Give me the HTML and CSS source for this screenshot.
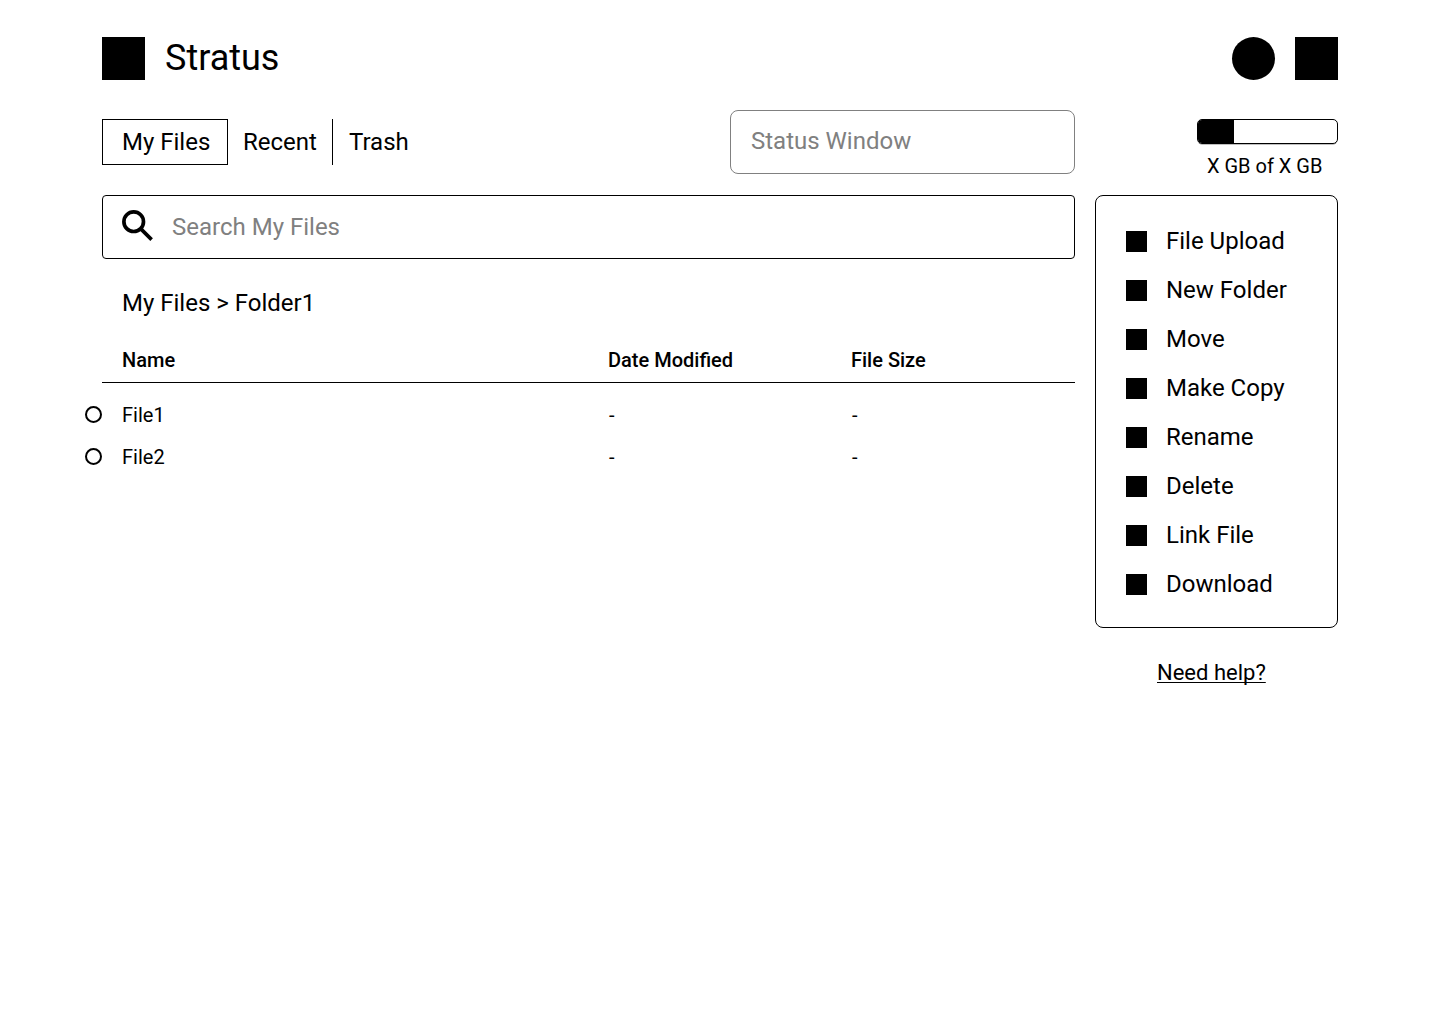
FILE: index.html
```html
<!DOCTYPE html>
<html lang="en">
<head>
<meta charset="utf-8">
<title>Stratus</title>
<link rel="stylesheet" href="styles.css">
</head>
<body>
<div class="page">
  <header class="header">
    <div class="logo"></div>
    <h1 class="brand">Stratus</h1>
    <div class="avatar"></div>
    <div class="apps"></div>
  </header>
  <div class="toolbar">
    <nav class="tabs">
      <a class="tab tab-active">My Files</a>
      <a class="tab tab-recent">Recent</a>
      <a class="tab tab-trash">Trash</a>
    </nav>
    <div class="status">Status Window</div>
    <div class="storage">
      <div class="meter"><div class="meter-fill"></div></div>
      <div class="storage-label">X GB of X GB</div>
    </div>
  </div>
  <div class="content">
    <main class="main">
      <div class="search">
        <svg class="search-icon" viewBox="0 0 31 31"><circle cx="11.7" cy="11.7" r="9.8"/><path d="M18.6 18.6 29.6 29.6"/></svg>
        <span>Search My Files</span>
      </div>
      <div class="breadcrumb">My Files &gt; Folder1</div>
      <div class="row row-head"><span>Name</span><span>Date Modified</span><span>File Size</span></div>
      <div class="rows">
        <div class="row"><i class="radio"></i><span>File1</span><span class="empty">-</span><span class="empty">-</span></div>
        <div class="row"><i class="radio"></i><span>File2</span><span class="empty">-</span><span class="empty">-</span></div>
      </div>
    </main>
    <aside class="side">
      <ul class="menu">
        <li>File Upload</li>
        <li>New Folder</li>
        <li>Move</li>
        <li>Make Copy</li>
        <li>Rename</li>
        <li>Delete</li>
        <li>Link File</li>
        <li>Download</li>
      </ul>
      <a class="help">Need help?</a>
    </aside>
  </div>
</div>
</body>
</html>
```
FILE: styles.css
```css
* { box-sizing: border-box; }
body {
  margin: 0;
  background: #fff;
  color: #000;
  font: 24px/28px Roboto, sans-serif;
}
.page { width: 1236px; margin: 0 auto; padding-top: 37px; }

.header { display: flex; height: 43px; align-items: center; }
.logo, .avatar, .apps { width: 43px; height: 43px; background: #000; }
.brand { margin: 0 auto 2px 20px; font-size: 36px; line-height: 42px; font-weight: 400; }
.avatar { border-radius: 50%; margin-right: 20px; }

.toolbar { display: flex; height: 64px; margin-top: 30px; }
.tabs { display: flex; height: 46px; margin-top: 9px; line-height: 46px; }
.tab-active { width: 126px; padding-left: 19px; border: 1px solid #000; line-height: 44px; }
.tab-recent { width: 105px; padding-left: 15px; border-right: 1px solid #000; }
.tab-trash { padding-left: 16px; }
.status {
  width: 345px;
  margin-left: auto;
  padding: 16px 20px;
  border: 1px solid #808080;
  border-radius: 8px;
  color: #808080;
}
.storage { width: 141px; margin: 9px 0 0 122px; }
.meter {
  height: 25px;
  border: 1px solid #000;
  border-radius: 5px;
  box-shadow: 0 1px 0 -0.5px rgba(0, 0, 0, 0.5);
  overflow: hidden;
}
.meter-fill { width: 36px; height: 100%; background: #000; }
.storage-label { margin-top: 10px; padding-left: 10px; font-size: 20px; line-height: 24px; white-space: nowrap; }

.content { display: flex; gap: 20px; margin-top: 21px; }
.main { width: 973px; }
.search {
  display: flex;
  align-items: center;
  gap: 19px;
  height: 64px;
  padding-left: 19px;
  border: 1px solid #000;
  border-radius: 4px;
  color: #808080;
}
.search-icon { width: 31px; height: 31px; margin-bottom: 3px; fill: none; stroke: #000; stroke-width: 3.7; }
.breadcrumb { margin-top: 30px; padding-left: 20px; }
.row {
  position: relative;
  display: grid;
  grid-template-columns: 486px 243px 1fr;
  height: 42px;
  padding-left: 20px;
  align-items: center;
  font-size: 20px;
}
.row-head { margin-top: 22px; height: 44px; padding-bottom: 2px; border-bottom: 1px solid #000; font-weight: 500; }
.rows { padding-top: 11px; }
.empty { padding-left: 1px; }
.radio {
  position: absolute;
  left: -17px;
  top: 12px;
  width: 17px;
  height: 17px;
  border: 2px solid #000;
  border-radius: 50%;
}

.side { width: 243px; }
.menu {
  height: 433px;
  margin: 0;
  padding: 20px 0 0 30px;
  border: 1px solid #000;
  border-radius: 8px;
  list-style: none;
}
.menu li { display: flex; align-items: center; gap: 19px; height: 49px; }
.menu li::before { content: ""; width: 21px; height: 21px; margin-top: 2px; background: #000; }
.help {
  display: block;
  margin: 31px 0 0 62px;
  font-size: 22px;
  text-decoration: underline;
  text-decoration-thickness: 1px;
  text-underline-offset: 2px;
  text-decoration-skip-ink: none;
}
```
